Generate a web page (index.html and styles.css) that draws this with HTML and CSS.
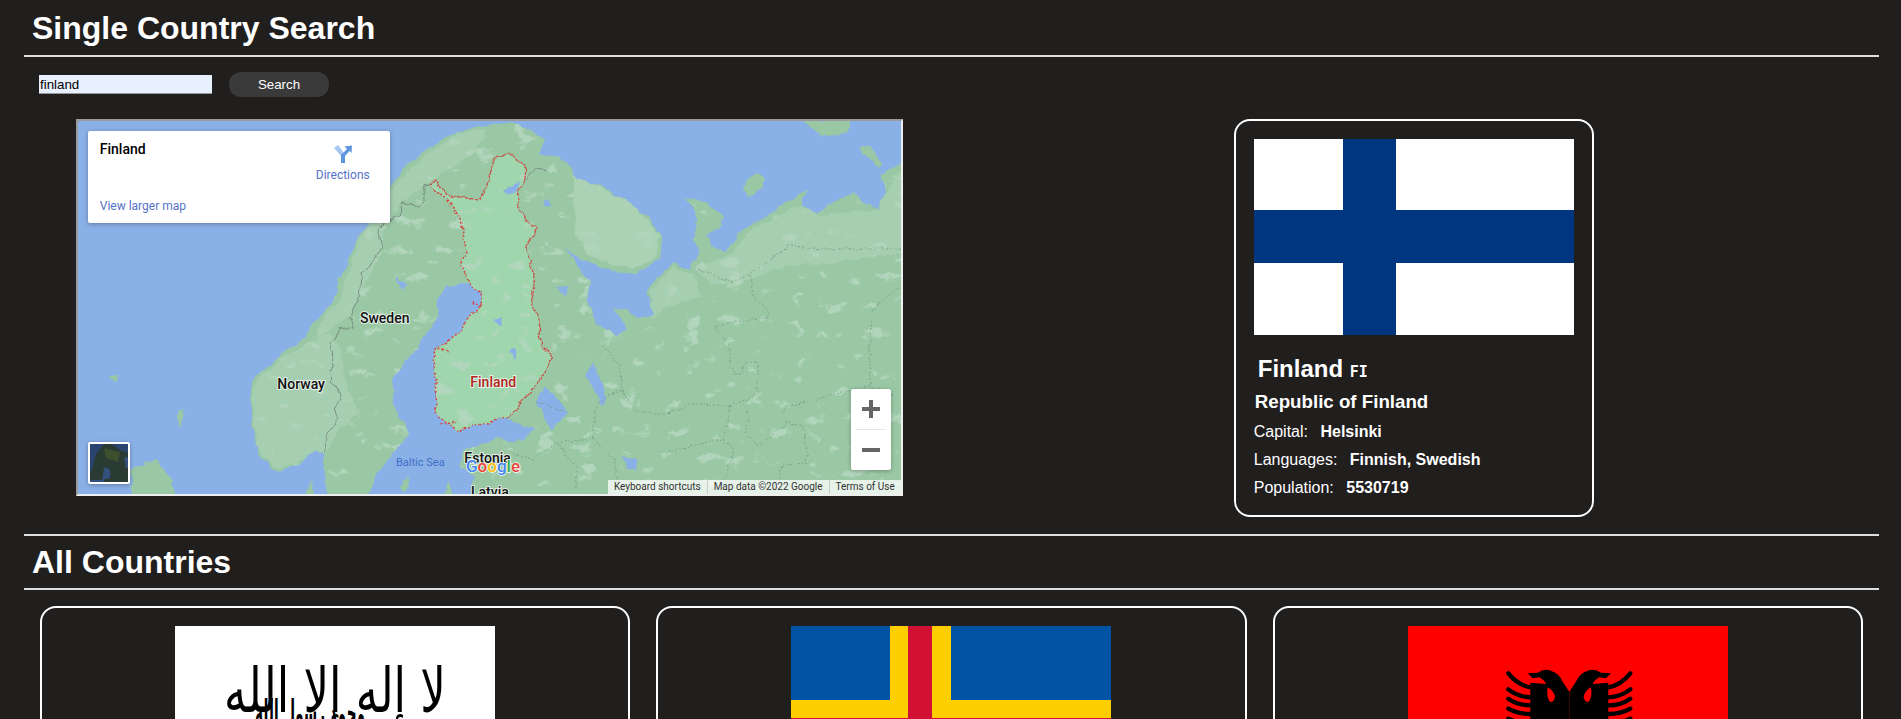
FILE: index.html
```html
<!DOCTYPE html>
<html>
	<head>
		<meta charset="utf-8">
		<title>Countries</title>
		<link rel="stylesheet" href="styles.css">
	</head>
	<body>
		<div class="page">
			<h1 class="title">Single Country Search</h1>
			<hr class="rule">
			<form class="search">
				<input class="search-input" type="text" value="finland">
				<button class="search-btn" type="button">Search</button>
			</form>
			<div class="result">
				<!-- embedded map -->
				<div class="map">
					<svg class="map-art" viewBox="6 6 2469 1119" width="823" height="373">
						<defs>
							<path id="mainland" d="M600 1060 L545 1000 L525 900 L525 790 L600 720 L680 660 L720 600 L770 550 L790 480 L850 350 L880 315 L945 200 L1000 130 L1100 60 L1170 30 L1242 20 L1302 10 L1352 30 L1407 65 L1385 105 L1442 115 L1482 145 L1502 180 L1572 200 L1642 240 L1712 290 L1762 360 L1752 420 L1682 465 L1622 460 L1542 430 L1492 410 L1457 380 L1492 420 L1542 490 L1532 540 L1562 610 L1622 650 L1652 630 L1612 560 L1642 570 L1692 600 L1732 585 L1712 520 L1752 470 L1792 435 L1842 450 L1867 390 L1852 360 L1867 300 L1832 240 L1892 250 L1942 290 L1937 320 L1892 345 L1912 385 L1952 400 L1987 340 L2042 310 L2132 250 L2202 210 L2172 260 L2227 280 L2262 250 L2332 225 L2372 260 L2402 265 L2432 220 L2412 170 L2480 130 L2560 130 L2560 1200 L1190 1200 L1190 1070 L1150 1040 L1160 990 L1260 960 L1340 965 L1380 930 L1342 920 L1297 895 L1240 910 L1140 935 L1085 890 L1075 770 L1075 695 L1140 650 L1190 580 L1220 560 L1215 520 L1180 495 L1110 500 L1080 560 L1085 600 L1010 700 L945 790 L960 880 L1000 940 L900 1070 L850 1200 L760 1200 L740 1000 L720 990 L680 1030 Z"/>
							<clipPath id="landclip"><use href="#mainland"/></clipPath>
							<filter id="rough" filterUnits="userSpaceOnUse" x="-60" y="-60" width="2700" height="1320" color-interpolation-filters="sRGB">
								<feTurbulence type="fractalNoise" baseFrequency=".028" numOctaves="3" seed="7" result="n"/>
								<feDisplacementMap in="SourceGraphic" in2="n" scale="22" xChannelSelector="R" yChannelSelector="G"/>
							</filter>
							<filter id="mottle" filterUnits="userSpaceOnUse" x="-60" y="-60" width="2700" height="1320" color-interpolation-filters="sRGB">
								<feTurbulence type="fractalNoise" baseFrequency=".016 .024" numOctaves="4" seed="11"/>
								<feColorMatrix type="matrix" values="0 0 0 0 .70  0 0 0 0 .84  0 0 0 0 .74  9 0 0 0 -5.800"/>
							</filter>
						</defs>
						<rect class="water" x="0" y="0" width="2600" height="1200"/>
						<g filter="url(#rough)">
							<use class="land" href="#mainland"/>
							<path class="land" d="M170 1050 L240 1020 L290 1090 L290 1200 L160 1200 Z M640 1200 L710 1085 L712 1200 Z M975 1100 L995 1070 L998 1110 L980 1125 Z M1090 1200 L1120 1085 L1150 1200 Z M2180 5 L2320 5 L2315 40 L2240 50 Z M2000 205 Q2020 160 2050 165 Q2070 180 2060 205 Q2030 240 2010 232 Z M2350 90 Q2370 60 2400 100 L2420 140 L2395 135 Z M305 890 L325 870 L315 930 Z M100 775 L130 765 L125 790 Z"/>
							<!-- Finland -->
							<path class="finland" d="M1060 200 L1080 180 L1115 230 L1165 235 L1205 245 L1235 190 L1255 120 L1272 115 L1302 100 L1352 150 L1342 200 L1327 215 L1332 280 L1377 330 L1347 390 L1377 460 L1367 550 L1397 630 L1382 655 L1432 720 L1372 810 L1297 895 L1240 910 L1140 935 L1085 890 L1075 770 L1075 695 L1140 650 L1190 580 L1220 560 L1215 520 L1180 495 L1155 440 L1170 400 L1155 300 L1115 245 Z"/>
							<!-- lighter ground -->
							<g clip-path="url(#landclip)">
								<rect x="0" y="0" width="2600" height="1200" filter="url(#mottle)"/>
								<path class="high high-soft" d="M530 800 L610 725 L700 670 L760 640 L790 680 L810 800 L850 880 L790 930 L760 990 L690 1020 L600 1050 L545 990 L530 900 Z"/>
								<path class="high high-soft" d="M790 550 L850 360 L950 210 L1020 130 L1150 40 L1230 30 L1200 100 L1060 190 L980 250 L930 320 L900 430 L850 530 L810 600 L720 660 L730 610 Z"/>
								<path class="high high-kola" d="M1490 170 L1570 205 L1680 260 L1750 350 L1740 420 L1670 450 L1600 440 L1530 400 L1500 350 Z"/>
								<path class="high high-soft" d="M1862 440 L1960 410 L2040 320 L2170 260 L2230 290 L2400 270 L2480 150 L2480 400 L2290 430 L2130 440 L2020 480 L1900 500 Z"/>
								<path class="high high-soft" d="M1720 520 L1790 445 L1850 470 L1880 530 L1780 560 L1730 600 Z"/>
							</g>
							<!-- lakes -->
							<path class="water" d="M1282 215 L1327 185 L1322 215 L1297 230 Z M1382 830 L1412 805 L1477 880 L1427 935 L1382 860 Z M1532 770 L1552 730 L1592 830 L1577 860 Z M1010 1000 Q1040 970 1060 1030 Q1040 1060 1020 1040 Z M1640 1010 L1680 1020 L1685 1050 L1650 1040 Z M1400 250 L1420 240 L1425 270 Z M1250 600 L1275 595 L1270 620 Z M1440 510 L1480 500 L1470 530 Z M960 470 L990 500 L975 510 Z M1300 700 L1320 690 L1320 720 Z"/>
							<!-- borders -->
							<path class="border" d="M1060 200 L1040 205 L1045 250 L1030 265 L985 250 L965 295 L925 310 L905 345 L915 385 L880 440 L855 465 L850 530 L820 590 L835 630 L790 635 L765 680 L770 790 L795 830 L775 870 L785 900 L755 945 L745 1000"/>
							<path class="border" d="M1342 190 L1382 150 L1407 155"/>
							<path class="border-dash" d="M2132 380 L2242 390 L2480 390 M1872 450 L1962 490 L2022 465 L2132 385 M2022 470 L2032 530 L2072 570 L2072 595 L1912 620 L1962 680 L1962 740 L1987 770 L2012 730 L2047 730 L2042 830 L1962 860 L1862 855 L1762 885 L1682 880 L1642 820 L1592 825 L1562 860 L1552 960 L1442 970 L1372 1020 L1300 1000 M1642 820 L1632 740 L1582 680 M1962 860 L1942 960 L1972 1000 L1942 1080 M2012 860 L2012 950 L2052 980 L2132 910 L2182 920 L2192 1030 L2122 1040 L2112 1080 M2122 880 L2142 860 L2282 825 L2382 795 L2382 650 L2392 570 L2472 500 M2382 800 L2447 830 M1382 850 L1477 880 M1552 960 L1620 1030 L1620 1100 M1442 970 L1500 1040 L1500 1110 M1760 1000 L1942 960"/>
							<path class="border-red" d="M1060 200 L1080 180 L1115 230 L1165 235 L1205 245 L1235 190 L1255 120 L1272 115 L1302 100 L1352 150 L1342 200 L1327 215 L1332 280 L1377 330 L1347 390 L1377 460 L1367 550 L1397 630 L1382 655 L1432 720 L1372 810 L1297 895"/>
							<path class="border-dots" d="M1297 895 L1240 910 L1140 935 L1085 890 L1075 770 L1075 695 L1140 650 L1190 580 L1220 560 L1215 520 L1180 495 L1155 440 L1170 400 L1155 300 L1115 245 L1060 200 M1190 550 L1220 570 M1075 690 L1115 695 M1090 915 L1140 910"/>
						</g>
						<!-- labels -->
						<text class="label" x="852" y="612">Sweden</text>
						<text class="label" x="604" y="810">Norway</text>
						<text class="label label-red" x="1183" y="804">Finland</text>
						<text class="label" x="1165" y="1033">Estonia</text>
						<text class="label" x="1185" y="1135">Latvia</text>
						<text class="sea" x="960" y="1040">Baltic Sea</text>
						<text class="logo" x="1170" y="1060"><tspan fill="#4285f4">G</tspan><tspan fill="#ea4335">o</tspan><tspan fill="#fbbc05">o</tspan><tspan fill="#4285f4">g</tspan><tspan fill="#34a853">l</tspan><tspan fill="#ea4335">e</tspan></text>
					</svg>
					<div class="map-box">
						<div class="map-name">Finland</div>
						<a class="map-link map-larger">View larger map</a>
						<div class="map-dir">
							<svg viewBox="0 0 18 18" width="18" height="18">
								<path d="M0 3 L4 0 L10 8 L10 11 L7 11 Z" fill="#a9c6ee"/>
								<path d="M7 18 L7 10 L13 4 L10.500 1.500 L18 0.500 L17.500 8 L15.500 6 L11 11 L11 18 Z" fill="#5e97e0"/>
							</svg>
							<a class="map-link">Directions</a>
						</div>
					</div>
					<div class="map-thumb">
						<svg viewBox="0 0 40 40" width="40" height="40">
							<rect width="40" height="40" fill="#2a3b33"/>
							<path d="M0 0 L14 0 L6 10 L3 22 L0 30 Z M22 0 L40 0 L40 10 L30 6 Z" fill="#2a4470"/>
							<path d="M14 24 Q22 22 20 34 L12 36 Z M34 14 L40 12 L40 24 L36 24 Z M0 36 L14 36 L16 40 L0 40 Z" fill="#33507c"/>
							<path d="M14 4 L30 8 L28 18 L16 14 Z" fill="#3d4f2c"/>
						</svg>
					</div>
					<div class="map-zoom">
						<div class="zoom-btn"><span class="zoom-h"></span><span class="zoom-v"></span></div>
						<div class="zoom-line"></div>
						<div class="zoom-btn"><span class="zoom-h"></span></div>
					</div>
					<div class="map-attr">
						<span>Keyboard shortcuts</span>
						<span>Map data ©2022 Google</span>
						<span>Terms of Use</span>
					</div>
				</div>
				<!-- selected country -->
				<div class="card card-single">
					<svg class="flag" viewBox="0 0 320 196" width="320" height="196">
						<rect width="320" height="196" fill="#fff"/>
						<rect x="89" width="53" height="196" fill="#003580"/>
						<rect y="71" width="320" height="53" fill="#003580"/>
					</svg>
					<div class="name">Finland <code class="code">FI</code></div>
					<div class="official">Republic of Finland</div>
					<div class="row">Capital: <b class="val">Helsinki</b></div>
					<div class="row">Languages: <b class="val">Finnish, Swedish</b></div>
					<div class="row">Population: <b class="val">5530719</b></div>
				</div>
			</div>
			<hr class="rule">
			<h1 class="title title-low">All Countries</h1>
			<hr class="rule">
			<div class="countries">
				<div class="card">
					<svg class="flag flag-tall" viewBox="0 0 320 209" width="320" height="209">
						<rect width="320" height="209" fill="#fff"/>
						<text class="shahada" transform="translate(49 86) scale(1 2.800)" textLength="222" lengthAdjust="spacingAndGlyphs">لا إله إلا الله</text>
						<text class="shahada shahada-low" transform="translate(80 99) scale(1 1.600)" textLength="110" lengthAdjust="spacingAndGlyphs">محمد رسول الله</text>
					</svg>
				</div>
				<div class="card">
					<svg class="flag flag-tall" viewBox="0 0 320 209" width="320" height="209">
						<rect width="320" height="209" fill="#0053a5"/>
						<rect x="99" width="61" height="209" fill="#ffce00"/>
						<rect y="74" width="320" height="61" fill="#ffce00"/>
						<rect x="117" width="24" height="209" fill="#d21034"/>
						<rect y="92" width="320" height="24" fill="#d21034"/>
					</svg>
				</div>
				<div class="card">
					<svg class="flag flag-tall" viewBox="0 0 320 209" width="320" height="209">
						<rect width="320" height="209" fill="#f00"/>
						<g transform="translate(83 34) scale(.3333)">
							<g id="half">
								<path d="M235 95 L215 65 Q205 40 180 32 Q160 25 140 38 L110 40 L125 55 L145 52 Q160 60 165 72 L118 68 L118 400 L235 400 Z" fill="#000"/>
								<path d="M170 82 Q165 115 178 126 Q190 126 192 110 Q188 92 170 82 Z" fill="#f00"/>
								<path d="M118 82 Q80 75 52 40 M118 112 Q80 110 52 88 M118 136 Q80 136 52 116 M118 162 Q80 162 52 146 M118 190 Q80 190 52 176" fill="none" stroke="#000" stroke-width="13" stroke-linecap="round"/>
							</g>
							<use href="#half" transform="translate(470 0) scale(-1 1)"/>
						</g>
					</svg>
				</div>
			</div>
		</div>
	</body>
</html>
```

FILE: styles.css
```css
*{
	box-sizing: border-box;
}
html,body{
	height:100%;
	margin:0;
	overflow:hidden;
}
body{
	background:#211e1e;
	color:#fff;
	font-family:"Liberation Sans",Arial,sans-serif;
	font-size:16px;
}
.page{
	margin:0 22px 0 24px;
	padding-top:10px;
}
.title{
	margin:0 0 8px;
	padding-left:8px;
	font-size:32px;
	line-height:37px;
	font-weight:bold;
}
.title-low{
	margin:8px 0 7px;
}
.rule{
	margin:0;
	height:2px;
	border:0;
	background:#ddd;
}
.search{
	display:flex;
	align-items:center;
	gap:17px;
	height:25px;
	margin:15px 0 22px;
	padding-left:15px;
}
.search-input{
	width:173px;
	height:19px;
	padding:0 1px;
	border:0;
	border-bottom:1px solid #999;
	background:#e8f0fe;
	color:#000;
	font-family:"Liberation Sans",Arial,sans-serif;
	font-size:13.33px;
}
.search-btn{
	width:100px;
	height:25px;
	border:0;
	border-radius:12px;
	background:#3a3a3a;
	color:#fff;
	font-family:"Liberation Sans",Arial,sans-serif;
	font-size:13.33px;
}
.result{
	display:grid;
	grid-template-columns:1fr 1fr;
	justify-items:center;
	align-items:start;
	margin-bottom:17px;
	padding:0 3px;
}

/* map */
.map{
	position:relative;
	width:827px;
	height:377px;
	border:2px solid;
	border-color:#9a9a9a #eee #eee #9a9a9a;
	overflow:hidden;
	font-family:Roboto,"Liberation Sans",sans-serif;
}
.map-art{
	display:block;
}
.water{
	fill:#8ab0e8;
}
.land{
	fill:#9ac8a4;
}
.high{
	fill:#b0d4ba;
}
.high-soft{
	fill-opacity:.55;
}
.high-kola{
	fill-opacity:.8;
}
.finland{
	fill:#a0d6ae;
}
.border{
	fill:none;
	stroke:#6f7f78;
	stroke-width:2.500;
}
.border-dash{
	fill:none;
	stroke:#6f9580;
	stroke-width:2.500;
	stroke-dasharray:5 6;
}
.border-red{
	fill:none;
	stroke:#c9504a;
	stroke-width:4;
	stroke-dasharray:9 2;
}
.border-dots{
	fill:none;
	stroke:#d5413c;
	stroke-width:4.500;
	stroke-dasharray:6 6;
}
.label{
	font-size:42px;
	font-weight:500;
	fill:#111;
	stroke:#fff;
	stroke-width:6px;
	stroke-opacity:.7;
	paint-order:stroke;
}
.label-red{
	fill:#b3261e;
}
.sea{
	font-size:33px;
	fill:#3f6fc4;
}
.logo{
	font-size:51px;
	font-weight:500;
	stroke:#fff;
	stroke-width:4px;
	paint-order:stroke;
}
.map-box{
	position:absolute;
	left:10px;
	top:10px;
	width:302px;
	height:92px;
	background:#fff;
	border-radius:2px;
	box-shadow:0 1px 4px rgba(0,0,0,.3);
}
.map-name{
	position:absolute;
	left:12px;
	top:10px;
	color:#000;
	font-size:14px;
	font-weight:500;
}
.map-link{
	color:#5472c9;
	font-size:12px;
}
.map-larger{
	position:absolute;
	left:12px;
	top:68px;
}
.map-dir{
	position:absolute;
	left:228px;
	top:14px;
	width:54px;
	display:flex;
	flex-direction:column;
	align-items:center;
	gap:5px;
}
.map-thumb{
	position:absolute;
	left:10px;
	bottom:10px;
	width:42px;
	height:42px;
	border:2px solid #fff;
	border-radius:2px;
	overflow:hidden;
	box-shadow:0 1px 4px rgba(0,0,0,.3);
}
.map-thumb svg{
	display:block;
}
.map-zoom{
	position:absolute;
	right:10px;
	bottom:24px;
	width:40px;
	height:81px;
	background:#fff;
	border-radius:2px;
	box-shadow:0 1px 4px rgba(0,0,0,.3);
}
.zoom-btn{
	position:relative;
	height:40px;
}
.zoom-line{
	height:1px;
	margin:0 5px;
	background:#e6e6e6;
}
.zoom-h{
	position:absolute;
	left:11px;
	top:18px;
	width:18px;
	height:4px;
	background:#666;
}
.zoom-v{
	position:absolute;
	left:18px;
	top:11px;
	width:4px;
	height:18px;
	background:#666;
}
.map-attr{
	position:absolute;
	right:0;
	bottom:0;
	display:flex;
	height:14px;
	background:rgba(255,255,255,.75);
	color:#333;
	font-size:10px;
	line-height:14px;
}
.map-attr span{
	padding:0 6px;
	border-left:1px solid #ccc;
}
.map-attr span:first-child{
	border-left:0;
}

/* cards */
.card{
	border:2px solid #fff;
	border-radius:16px;
	padding:18px;
}
.card-single{
	width:360px;
	height:398px;
}
.flag{
	display:block;
}
.name{
	margin:20px 0 0 4px;
	font-size:24px;
	line-height:28px;
	font-weight:bold;
}
.code{
	font-family:"DejaVu Sans Mono",monospace;
	font-size:15px;
	font-weight:bold;
}
.official{
	margin:4px 0 5px 1px;
	font-size:18.72px;
	line-height:23px;
	font-weight:bold;
}
.row{
	height:28px;
	line-height:28px;
}
.val{
	margin-left:8px;
}
.countries{
	display:grid;
	grid-template-columns:repeat(3,1fr);
	gap:26px;
	margin-top:16px;
	padding:0 16px;
}
.countries .card{
	height:300px;
}
.flag-tall{
	margin:0 auto;
}
.shahada{
	font-family:"DejaVu Sans",sans-serif;
	font-size:22px;
	fill:#000;
}
.shahada-low{
	font-weight:bold;
}
```
